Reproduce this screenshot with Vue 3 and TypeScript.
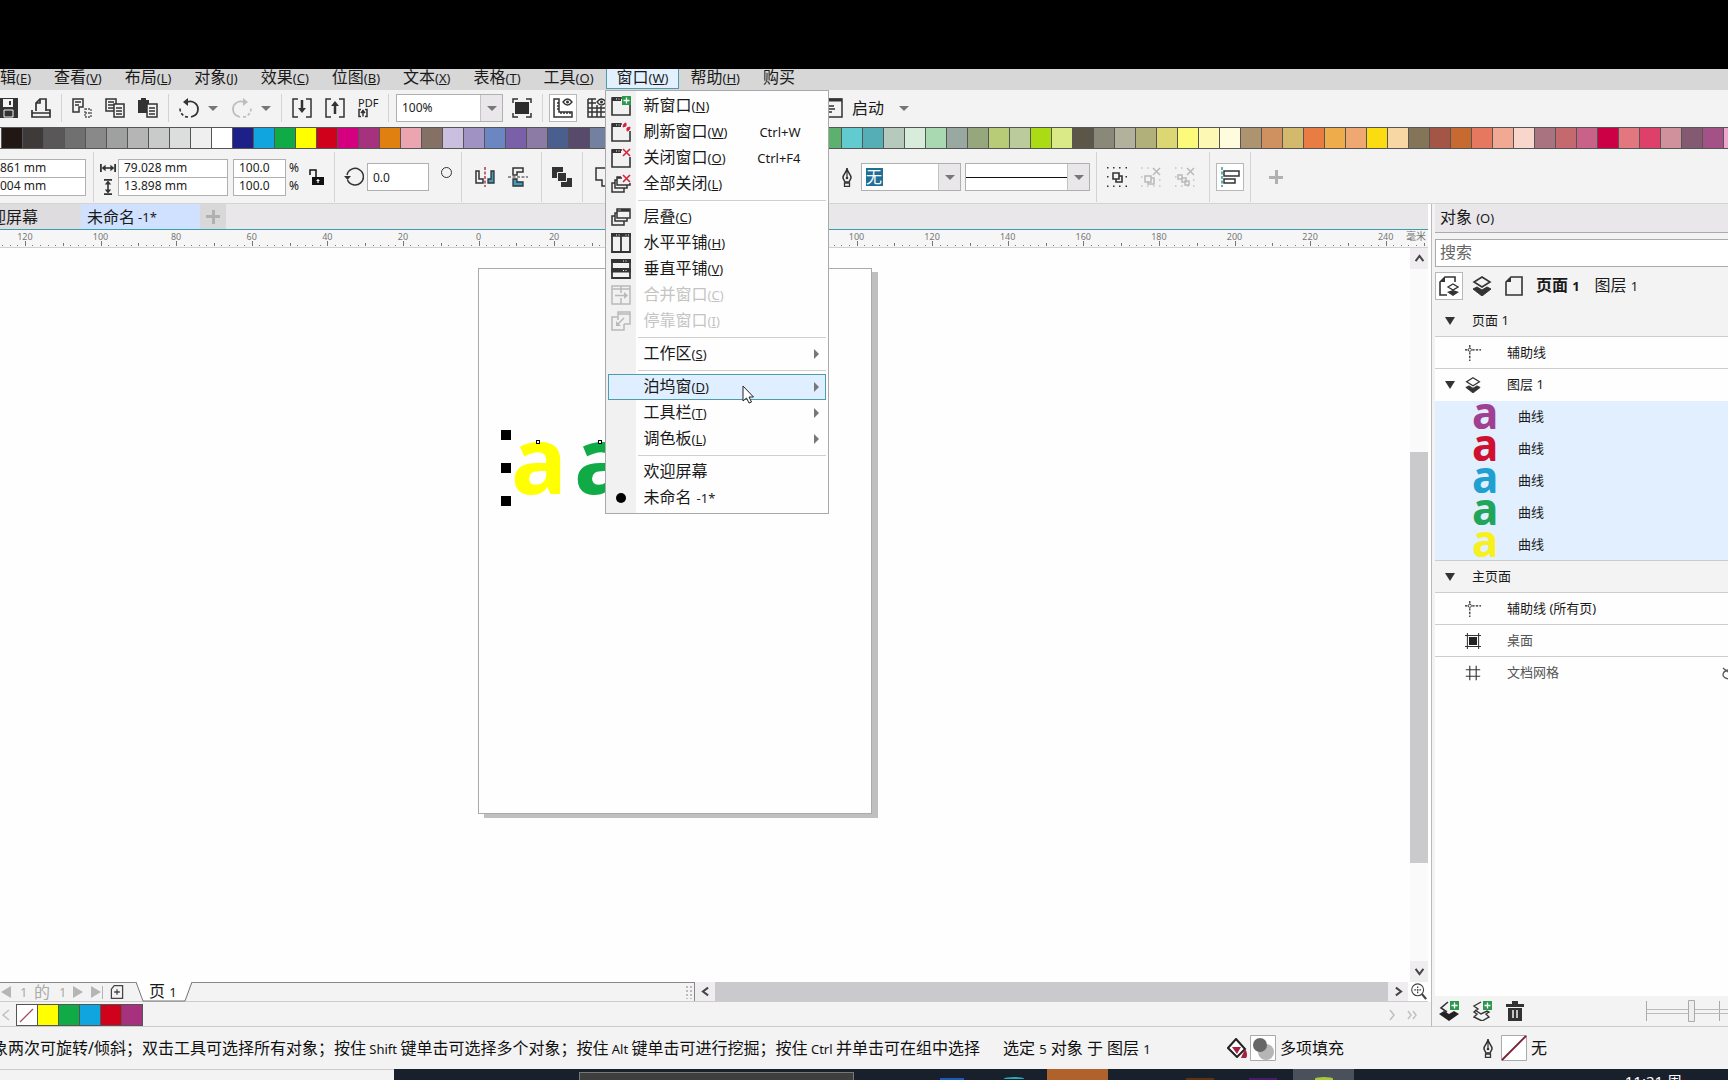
<script setup lang="ts">
import { ref } from 'vue'

interface MenuLabel { text: string; key?: string }
interface MenuRow {
  text?: string
  key?: string
  suffix?: string
  icon?: string
  shortcut?: string
  sub?: boolean
  disabled?: boolean
  active?: boolean
  sep?: boolean
}

const thin = 'fill="none" stroke="#333" stroke-width="1.5"'
const grey = 'fill="none" stroke="#b9b9b9" stroke-width="1.5"'
const win = (c: string) =>
  `<path d="M11 2H1v17h18V9" fill="none" stroke="${c}" stroke-width="1.6"/><path d="M1 1h9v4H1z" fill="${c}"/><path d="M5 3h1M7.500 3h1" stroke="#fff"/>`
const cascade =
  `<path d="M6 2h13v9H6zM6 4h13" ${thin}/><path d="M10 3h8" stroke="#333" stroke-width="2"/><path d="M6 6H4v8h12v-3M4 9H1v9h12v-4" ${thin}/>`
const cross = '<path d="M12 1l7 7M19 1l-7 7" stroke="#d2233c" stroke-width="1.6"/>'
const plusBadge = '<path d="M11 0h9v9h-9z" fill="#2a9a4a"/><path d="M15.500 1.500v6M12.500 4.500h6" stroke="#fff" stroke-width="1.300"/>'
const pen =
  '<path d="M10 1c0 5 4.500 6 4 10l-2 4H8l-2-4C5.500 7 10 6 10 1z" fill="none" stroke="#333" stroke-width="1.500"/><path d="M10 2v8" stroke="#333" stroke-width="1.200"/><circle cx="10" cy="11" r="1.300" fill="#333"/><path d="M7.500 16h5v3.300h-5z" fill="none" stroke="#333" stroke-width="1.300"/>'
const dots = (c: string) =>
  `<g fill="${c}"><path d="M0 0h1.500v1.500H0zM6 0h1.500v1.500H6zM12 0h1.500v1.500H12zM18.500 0H20v1.500h-1.500zM0 9h1.500v1.500H0zM18.500 9H20v1.500h-1.500zM0 18.500h1.500V20H0zM6 18.500h1.500V20H6zM12 18.500h1.500V20H12zM18.500 18.500H20V20h-1.500z"/></g>`
const greyCross = '<path d="M12 1l7 7M19 1l-7 7" stroke="#b9b9b9" stroke-width="1.500"/>'
const greyDots = '<path d="M0 1h1.500M6 1h1.500M0 10h1.500M0 19h1.500M6 19h1.500M12 19h1.500M18 19h1.500M18 13h1.500" stroke="#c4c4c4" stroke-width="1.500"/>'

const icons: Record<string, string> = {
  save: '<path d="M0 0h20v20H0z" fill="#333"/><path d="M5 1h10v8H5z" fill="#f3f3f3"/><path d="M11 3h2v4h-2z" fill="#333"/><path d="M6 12h9v7H6z" fill="#333" stroke="#f3f3f3"/><path d="M3 10h14" stroke="#333" stroke-width="2"/>',
  print: `<path d="M5 13V5l4-4h6v12M9 1v4H5M1 12v7h18v-7h-4M1 15h18" fill="none" stroke="#333" stroke-width="1.700"/>`,
  cut: `<path d="M7 14H1V1h10v8H7zM3 4h6M3 7h4" ${thin}/><path d="M13 11h6v8h-6zM13 15h6" fill="none" stroke="#555" stroke-width="1.300" stroke-dasharray="2 1"/>`,
  copy: `<path d="M1 1h10v12H1zM3 4h6M3 7h6M3 10h6" ${thin}/><path d="M9 6h10v13H9z" fill="#f3f3f3" stroke="#333" stroke-width="1.500"/><path d="M11 10h6M11 13h6M11 16h6" ${thin}/>`,
  paste: `<path d="M0 2h3V0h5v2h3v13H0z" fill="#333"/><path d="M9 6h10v13H9z" fill="#f3f3f3" stroke="#333" stroke-width="1.500"/><path d="M11 10h6M11 13h6M11 16h6" ${thin}/>`,
  undo: '<path d="M8 4c6-2 11 2 11 7 0 4-3 7-7 8" fill="none" stroke="#333" stroke-width="1.800"/><path d="M9 19c-5 0-8-4-8-9" fill="none" stroke="#333" stroke-width="1.600" stroke-dasharray="3 2"/><path d="M9 0v8L4 4z" fill="#333"/>',
  redo: '<path d="M12 4C6 2 1 6 1 11c0 4 3 7 7 8" fill="none" stroke="#bdbdbd" stroke-width="1.800"/><path d="M11 19c5 0 8-4 8-9" fill="none" stroke="#bdbdbd" stroke-width="1.600" stroke-dasharray="3 2"/><path d="M11 0v8l5-4z" fill="#bdbdbd"/>',
  import: `<path d="M6 1H1v18h5M14 1h5v18h-5" ${thin}/><path d="M10 2v9" stroke="#333" stroke-width="2.500"/><path d="M6 10h8l-4 5z" fill="#333"/>`,
  export: `<path d="M6 1H1v18h5M14 1h5v18h-5" ${thin}/><path d="M10 8v8" stroke="#333" stroke-width="2.500"/><path d="M6 8h8l-4-5z" fill="#333"/>`,
  full: '<path d="M3 4h14v12H3z" fill="#2d2d2d"/><path d="M1 5V1h5M14 1h5v4M1 15v4h5M14 19h5v-4" fill="none" stroke="#333" stroke-width="1.500"/>',
  rulers: `<path d="M1 1h5v13h13v5H1zM4 5h2M4 8h2M4 11h2M8 16v-2M11 16v-2M14 16v-2M17 16v-2" ${thin}/><path d="M10 4c3-4 6-4 9 0-3 4-6 4-9 0z" fill="none" stroke="#333" stroke-width="1.300"/><circle cx="14.500" cy="4" r="1.500" fill="#333"/>`,
  grid: `<path d="M1 1v18h18V8M1 5h8M1 10h18M1 14h18M5 1v18M10 7v12M14 8v11M1 1h8" ${thin}/><path d="M10 4c3-4 6-4 9 0-3 4-6 4-9 0z" fill="none" stroke="#333" stroke-width="1.300"/><circle cx="14.500" cy="4" r="1.500" fill="#333"/>`,
  launch: `<path d="M1 1h18v18H1z" ${thin}/><path d="M1 2h18" stroke="#333" stroke-width="3"/><path d="M4 8h7M5 11h7M4 14h5" ${thin}/>`,
  width: '<path d="M1 5v10M19 5v10" stroke="#333" stroke-width="2.500"/><path d="M4 10h12" stroke="#333" stroke-width="2"/><path d="M2 10l5-4v8zM18 10l-5-4v8z" fill="#333"/>',
  height: '<path d="M5 1h10M5 19h10" stroke="#333" stroke-width="2.500"/><path d="M10 4v12" stroke="#333" stroke-width="2"/><path d="M10 2L6 7h8zM10 18l-4-5h8z" fill="#333"/>',
  lock: '<path d="M8 11V3H2v5" fill="none" stroke="#111" stroke-width="1.500"/><path d="M4 10h12v8H4z" fill="#111"/><path d="M10 12v4M8.500 13.500h3" stroke="#fff" stroke-width="1.200"/>',
  rotate: '<path d="M3.500 13A8.300 8.300 0 1 0 3 8" fill="none" stroke="#333" stroke-width="1.500"/><path d="M0 9h7l-3.500 4z" fill="#333"/>',
  mirrorH: '<path d="M1 4h3v8h4v4H1z" fill="none" stroke="#333" stroke-width="1.500"/><path d="M19 4h-3v8h-3v4h6z" fill="#3d9dbd" stroke="#333" stroke-width="1.300"/><path d="M10 0v20" stroke="#a02040" stroke-width="1.300" stroke-dasharray="3 1.500"/>',
  mirrorV: '<path d="M5 8V1h10v4H9v3z" fill="none" stroke="#333" stroke-width="1.500"/><path d="M5 12v7h10v-4H9v-3z" fill="#3d9dbd" stroke="#333" stroke-width="1.300"/><path d="M0 10h20" stroke="#333" stroke-width="1.200" stroke-dasharray="3 1.500"/>',
  combine: '<path d="M0 0h11v11H0zM11 11h9v9H9v-7z" fill="#333"/><path d="M5.500 5.500h9v9h-9z" fill="#333" stroke="#f3f3f3"/>',
  trim: `<path d="M1 1h12v6h6v12H7v-6H1z" ${thin}/>`,
  pen,
  group: dots('#333') + '<path d="M6 6h6v6H6z" fill="none" stroke="#333" stroke-width="1.600"/><path d="M12 9h3v6H9v-3" fill="none" stroke="#333" stroke-width="1.600"/>',
  ungroup: greyDots + greyCross + `<path d="M4 9h6v6H4zM10 11h3v6H7v-2" ${grey}/>`,
  ungroupAll: greyDots + greyCross + `<path d="M3 8h4v4H3zM7 11h4v4H7zM10 14h4v4h-4z" ${grey}/>`,
  align: '<path d="M2 0v20" stroke="#2a9a9a" stroke-width="1.500" stroke-dasharray="3 1.500"/><path d="M4 4h15v5H4zM4 12h11v4H4z" fill="none" stroke="#333" stroke-width="1.500"/>',
  newWin: win('#333') + plusBadge,
  refresh: win('#333') + '<path d="M12 5c0-3 2-4 3-4v3zM19 5c0 3-2 4-3 4V6z" fill="#d2233c" stroke="#d2233c"/>',
  closeWin: win('#333') + cross,
  closeAll: `<path d="M10 3H6v8h13V9M6 6H4v8h12v-3M4 9H1v9h12v-4M6 4h5" ${thin}/>` + cross,
  cascade,
  tileH: '<path d="M1 1h18v18H1zM10 1v18" fill="none" stroke="#333" stroke-width="1.800"/><path d="M0 2h20" stroke="#333" stroke-width="3.500"/><path d="M5 2h1M7.500 2h1M14.500 2h1M17 2h1" stroke="#fff"/>',
  tileV: '<path d="M1 1h18v18H1zM1 10h18" fill="none" stroke="#333" stroke-width="1.800"/><path d="M0 2h20M0 11.500h20" stroke="#333" stroke-width="4"/><path d="M12 2h1M14.500 2h1M12 11.500h1M14.500 11.500h1" stroke="#fff"/>',
  merge: `<path d="M1 1h18v18H1zM1 4h18M10 1v7M10 13v6M4 10.500h12" ${grey}/><path d="M13 7l4 3.500-4 3.500z" fill="#b9b9b9"/>`,
  dock: `<path d="M7 9V1h12v12h-6M7 3h12M7 6H1v13h12v-6M7 13l6-6" ${grey}/><path d="M5 10v5h5z" fill="#b9b9b9"/>`,
  bullet: '<circle cx="10" cy="10" r="5" fill="#000"/>',
  pageLayers: '<path d="M16 6V1H6L1 6v13h7" fill="none" stroke="#333" stroke-width="1.600"/><path d="M1 6h5V1z" fill="#333"/><path d="M14 8l5 3-5 3-5-3z" fill="#fff" stroke="#333" stroke-width="1.300"/><path d="M8 16l6-2 6 2-6 4z" fill="#333"/>',
  layers: '<path d="M10 1l8 5-8 5-8-5z" fill="none" stroke="#333" stroke-width="1.600"/><path d="M1 13l4-2 5 3 5-3 4 2-9 7z" fill="#333" stroke="#333"/>',
  page: '<path d="M2 6l5-5h11v18H2z" fill="none" stroke="#333" stroke-width="1.600"/><path d="M2 6h5V1z" fill="#333"/>',
  guides: '<path d="M6 0v20M0 6h20" fill="none" stroke="#222" stroke-width="1.500" stroke-dasharray="3 1.500"/><circle cx="6" cy="6" r="2" fill="#fff" stroke="#222"/>',
  desktop: '<path d="M5 5h10v10H5z" fill="#222"/><path d="M3 0v20M17 0v20M0 3h20M0 17h20" stroke="#333" stroke-width="1.300"/>',
  gridDoc: '<path d="M6 1v18M14 1v18M1 6h18M1 14h18" stroke="#333" stroke-width="1.400"/>',
  newLayer: '<path d="M9 1L2 7l6 4" fill="none" stroke="#333" stroke-width="1.600"/><path d="M0 13l5-3 5 3 5-3 5 3-10 7z" fill="#222"/>' + plusBadge,
  newMaster: '<path d="M9 1L2 5l4 3-4 3 3 2-3 3 8 4 7-4-3-3 3-2-2-1-6 3-6-4" fill="none" stroke="#333" stroke-width="1.400"/>' + plusBadge,
  trash: '<path d="M1 3h18v3H1zM7 0h6v3H7z" fill="#333"/><path d="M3 7h14v13H3z" fill="#333"/><path d="M8 9v8M12 9v8" stroke="#f3f3f3" stroke-width="1.500"/>',
  zoom: '<circle cx="9" cy="8" r="7" fill="none" stroke="#444" stroke-width="1.300"/><path d="M14 13l5 6" stroke="#444" stroke-width="2.500"/><path d="M9 4v8M5 8h8" stroke="#444" stroke-width="1.500" stroke-dasharray="2 1"/>',
  addPage: '<path d="M2 6l4-5h12v18H2zM10 6v8M6 10h8" fill="none" stroke="#444" stroke-width="1.800"/>',
  bucket: '<path d="M9 1l9 10-8 8-9-9z" fill="#fff" stroke="#222" stroke-width="2"/><path d="M5 9h9l-4 7z" fill="#a82040"/><path d="M18 11c3 4 2 8 1 9h-5z" fill="#a82040"/>',
}

const menus: MenuLabel[] = [
  { text: '编辑', key: 'E' }, { text: '查看', key: 'V' }, { text: '布局', key: 'L' },
  { text: '对象', key: 'J' }, { text: '效果', key: 'C' }, { text: '位图', key: 'B' },
  { text: '文本', key: 'X' }, { text: '表格', key: 'T' }, { text: '工具', key: 'O' },
]
const menusAfter: MenuLabel[] = [{ text: '帮助', key: 'H' }, { text: '购买' }]

const rows: MenuRow[] = [
  { text: '新窗口', key: 'N', icon: 'newWin' },
  { text: '刷新窗口', key: 'W', icon: 'refresh', shortcut: 'Ctrl+W' },
  { text: '关闭窗口', key: 'O', icon: 'closeWin', shortcut: 'Ctrl+F4' },
  { text: '全部关闭', key: 'L', icon: 'closeAll' },
  { sep: true },
  { text: '层叠', key: 'C', icon: 'cascade' },
  { text: '水平平铺', key: 'H', icon: 'tileH' },
  { text: '垂直平铺', key: 'V', icon: 'tileV' },
  { text: '合并窗口', key: 'C', icon: 'merge', disabled: true },
  { text: '停靠窗口', key: 'I', icon: 'dock', disabled: true },
  { sep: true },
  { text: '工作区', key: 'S', sub: true },
  { sep: true },
  { text: '泊坞窗', key: 'D', sub: true, active: true },
  { text: '工具栏', key: 'T', sub: true },
  { text: '调色板', key: 'L', sub: true },
  { sep: true },
  { text: '欢迎屏幕' },
  { text: '未命名', suffix: '-1*', icon: 'bullet' },
]

const palette: string[] = [
  '#211815', '#3e3a39', '#595757', '#717071', '#898989', '#9fa0a0', '#b5b5b6', '#c9caca', '#dcdddd', '#efefef',
  '#ffffff', '#1d2088', '#10a5de', '#10ab46', '#ffff00', '#d0021b', '#d4007f', '#a5317f', '#e08010', '#eba5b0',
  '#857066', '#cbbfe0', '#a192c4', '#6b86c1', '#7a60a8', '#8c7ba5', '#4b5f8e', '#584a6a', '#73809f', '#6b7f94',
  '#8fa3b0', '#a8c0cc', '#7fb6c8', '#4aa0b8', '#3f8c96', '#5a9a90', '#7cb3a2', '#4f9c7e', '#3fa56c', '#5cb070',
  '#62cbd0', '#55adb5', '#b5cabd', '#d8ecdc', '#a9d9b0', '#99a8a0', '#96a67d', '#b8cc77', '#bbcb9b', '#aadb14',
  '#d9ea86', '#5b5647', '#8a8878', '#b1b19c', '#b1b07a', '#dcd673', '#fcfa7a', '#fdf9b4', '#fffbdf', '#ae9370',
  '#cf9160', '#d2b96c', '#e87c42', '#eeac4b', '#f0a873', '#fbdc10', '#f7d7a4', '#857558', '#a35546', '#c76a30',
  '#e6785f', '#f1a993', '#f8d6cb', '#a9747f', '#c46a6e', '#c96289', '#cc0044', '#e37780', '#df4069', '#d0919c',
  '#845a73', '#a45188', '#f0a5cd',
]
const docPalette: string[] = ['#ffff00', '#10ab46', '#10a5de', '#d0021b', '#a5317f']

// Ruler: 20 mm take 75.6 px on screen, origin at the left edge of the page.
const origin = 478.5
const step = 75.6
const labels = Array.from({ length: 19 }, (_, i) => i - 6).map(n => ({
  x: origin + n * step, text: String(Math.abs(n * 20)),
})).filter(l => l.x < 1400)
const ticks = Array.from({ length: 189 }, (_, i) => i - 63).map(n => ({
  x: Math.round(origin + (n * step) / 10),
  h: n % 10 === 0 ? 5 : n % 5 === 0 ? 3 : 1,
}))

const curves: string[] = ['#a04090', '#d0102f', '#20a0d0', '#20a55a', '#f7f01c']
const x = ref('861 mm')
const y = ref('004 mm')
const w = ref('79.028 mm')
const h = ref('13.898 mm')
const sx = ref('100.0')
const sy = ref('100.0')
const angle = ref('0.0')
const query = ref('')
</script>

<template>
  <div class="app">
    <div class="blank"></div>

    <nav class="menubar">
      <button v-for="m in menus" :key="m.text" class="menu-btn">{{ m.text }}<small>(<u>{{ m.key }}</u>)</small></button>
      <div class="menu-open">
        <button class="menu-btn open">窗口<small>(<u>W</u>)</small></button>
        <div class="dropdown" role="menu">
          <template v-for="(r, i) in rows" :key="i">
            <div v-if="r.sep" class="sep" role="separator"></div>
            <button v-else class="row" :class="{ active: r.active }" :disabled="r.disabled" role="menuitem">
              <span class="gutter"><svg v-if="r.icon" class="ic" viewBox="0 0 20 20" v-html="icons[r.icon]"></svg></span>
              <span class="row-text">{{ r.text }}<small v-if="r.key">(<u>{{ r.key }}</u>)</small><small v-if="r.suffix" class="suffix">{{ r.suffix }}</small></span>
              <span v-if="r.shortcut" class="shortcut">{{ r.shortcut }}</span>
              <i v-if="r.sub" class="sub"></i>
            </button>
          </template>
          <svg class="cursor" viewBox="0 0 12 19"><path d="M1 1v15l3.500-3 2.500 5 2.500-1-2.500-5h4.500z" fill="#fff" stroke="#222" /></svg>
        </div>
      </div>
      <button v-for="m in menusAfter" :key="m.text" class="menu-btn">{{ m.text }}<small v-if="m.key">(<u>{{ m.key }}</u>)</small></button>
    </nav>

    <div class="toolbar">
      <div class="group first">
        <button v-for="n in ['save', 'print']" :key="n" class="tool" :aria-label="n"><svg class="ic" viewBox="0 0 20 20" v-html="icons[n]"></svg></button>
      </div>
      <div class="group">
        <button v-for="n in ['cut', 'copy', 'paste']" :key="n" class="tool" :aria-label="n"><svg class="ic" viewBox="0 0 20 20" v-html="icons[n]"></svg></button>
      </div>
      <div class="group history">
        <button v-for="n in ['undo', 'redo']" :key="n" class="tool split" :aria-label="n"><svg class="ic" viewBox="0 0 20 20" v-html="icons[n]"></svg><i class="caret"></i></button>
      </div>
      <div class="group">
        <button v-for="n in ['import', 'export']" :key="n" class="tool" :aria-label="n"><svg class="ic" viewBox="0 0 20 20" v-html="icons[n]"></svg></button>
        <button class="tool pdf" aria-label="pdf">
          <span>PDF</span>
          <svg viewBox="0 0 10 9"><path d="M3 1H1v7h2M7 1h2v7H7M5 8V3M3 4.500L5 2l2 2.500" fill="none" stroke="#333" stroke-width="1.500" /></svg>
        </button>
      </div>
      <div class="group view">
        <label class="combo zoom-combo"><select aria-label="缩放级别"><option>100%</option></select><span class="drop"><i class="caret"></i></span></label>
        <button class="tool" aria-label="full"><svg class="ic" viewBox="0 0 20 20" v-html="icons.full"></svg></button>
      </div>
      <div class="group show">
        <button class="boxed" aria-label="rulers"><svg class="ic" viewBox="0 0 20 20" v-html="icons.rulers"></svg></button>
        <button class="tool" aria-label="grid"><svg class="ic" viewBox="0 0 20 20" v-html="icons.grid"></svg></button>
      </div>
      <button class="launch"><svg class="ic" viewBox="0 0 20 20" v-html="icons.launch"></svg>启动<i class="caret"></i></button>
    </div>

    <div class="palette">
      <button v-for="(c, i) in palette" :key="i" class="swatch" :aria-label="c" :style="{ background: c }"></button>
    </div>

    <div class="props">
      <div class="pgroup pos">
        <div class="pair cut-pair"><input v-model="x" aria-label="X"><input v-model="y" aria-label="Y"></div>
      </div>
      <div class="pgroup size">
        <div class="mini"><svg viewBox="0 0 20 20" v-html="icons.width"></svg><svg viewBox="0 0 20 20" v-html="icons.height"></svg></div>
        <div class="pair wide"><input v-model="w" aria-label="宽度"><input v-model="h" aria-label="高度"></div>
        <div class="pair narrow"><input v-model="sx" aria-label="水平比例"><input v-model="sy" aria-label="垂直比例"></div>
        <div class="pct"><span>%</span><span>%</span></div>
        <button class="tool" aria-label="lock"><svg class="ic" viewBox="0 0 20 20" v-html="icons.lock"></svg></button>
      </div>
      <div class="pgroup angle">
        <svg class="ic" viewBox="0 0 20 20" v-html="icons.rotate"></svg>
        <input v-model="angle" aria-label="旋转角度">
        <i class="degree"></i>
      </div>
      <div class="pgroup mirror">
        <button v-for="n in ['mirrorH', 'mirrorV']" :key="n" class="tool" :aria-label="n"><svg class="ic" viewBox="0 0 20 20" v-html="icons[n]"></svg></button>
      </div>
      <div class="pgroup single">
        <button class="tool" aria-label="combine"><svg class="ic" viewBox="0 0 20 20" v-html="icons.combine"></svg></button>
      </div>
      <div class="pgroup shaping">
        <button class="tool" aria-label="trim"><svg class="ic" viewBox="0 0 20 20" v-html="icons.trim"></svg></button>
      </div>
      <div class="pgroup outline">
        <svg class="ic" viewBox="0 0 20 20" v-html="icons.pen"></svg>
        <label class="combo outline-combo"><select aria-label="轮廓宽度"><option>无</option></select><span class="drop"><i class="caret"></i></span></label>
        <label class="combo line-combo"><select aria-label="线条样式"><option></option></select><span class="drop"><i class="caret"></i></span></label>
      </div>
      <div class="pgroup grouping">
        <button v-for="n in ['group', 'ungroup', 'ungroupAll']" :key="n" class="tool" :aria-label="n"><svg class="ic" viewBox="0 0 20 20" v-html="icons[n]"></svg></button>
      </div>
      <div class="pgroup aligning">
        <button class="boxed" aria-label="align"><svg class="ic" viewBox="0 0 20 20" v-html="icons.align"></svg></button>
      </div>
      <button class="plus" aria-label="add"></button>
    </div>

    <main class="main">
      <section class="doc">
        <div class="tabs">
          <button class="tab">迎屏幕</button>
          <button class="tab current">未命名 <small>-1*</small></button>
          <button class="tab-add" aria-label="new tab"><span class="plus"></span></button>
        </div>
        <div class="ruler">
          <svg class="scale" height="17">
            <text v-for="l in labels" :key="l.x" :x="l.x" y="10" text-anchor="middle">{{ l.text }}</text>
            <rect v-for="t in ticks" :key="t.x" :x="t.x" :y="16 - t.h" width="1" :height="t.h" fill="#777" />
          </svg>
          <span class="unit">毫米</span>
        </div>
        <div class="work">
          <div class="canvas">
            <div class="sheet"></div>
            <span class="glyph yellow">a</span>
            <span class="glyph green">a</span>
            <i class="node n1"></i><i class="node n2"></i>
            <i class="handle h1"></i><i class="handle h2"></i><i class="handle h3"></i>
          </div>
          <div class="vscroll">
            <button aria-label="up"><svg viewBox="0 0 10 10"><path d="M2 7l3-4 3 4" /></svg></button>
            <div class="vtrack"><div class="vthumb"></div></div>
            <button aria-label="down"><svg viewBox="0 0 10 10"><path d="M2 3l3 4 3-4" /></svg></button>
          </div>
        </div>
        <div class="pagenav">
          <div class="pager">
            <i class="arrow left"></i><small>1</small><span>的</span><small>1</small><i class="arrow"></i><i class="arrow last"></i><i class="bar"></i>
            <svg class="add-page" viewBox="0 0 20 20" v-html="icons.addPage"></svg>
          </div>
          <button class="page-tab">
            <svg viewBox="0 0 56 20"><path d="M0 0l7 19h41l7-19z" fill="#fff" /><path d="M0 0l7 19h42l7-19" fill="none" stroke="#777" /></svg>
            <span>页 <small>1</small></span>
          </button>
          <div class="nav-rest"><i class="grip"></i></div>
          <button class="harrow" aria-label="left"><svg viewBox="0 0 10 10"><path d="M7 2L3 5l4 3" /></svg></button>
          <div class="hthumb"></div>
          <button class="harrow" aria-label="right"><svg viewBox="0 0 10 10"><path d="M3 2l4 3-4 3" /></svg></button>
          <button class="zoom-btn" aria-label="zoom"><svg viewBox="0 0 20 20" v-html="icons.zoom"></svg></button>
        </div>
        <div class="doc-palette">
          <svg class="chev" viewBox="0 0 10 12"><path d="M8 1L2 6l6 5" /></svg>
          <div class="doc-swatches">
            <button class="swatch none" aria-label="none"><svg viewBox="0 0 20 20"><path d="M3 17L16 4" stroke="#a05060" stroke-width="1.300" /></svg></button>
            <button v-for="c in docPalette" :key="c" class="swatch" :aria-label="c" :style="{ background: c }"></button>
          </div>
          <svg class="chev push" viewBox="0 0 10 12"><path d="M3 1l4 5-4 5" /></svg>
          <svg class="chev" viewBox="0 0 10 12"><path d="M1 2l3 4-3 4M6 2l3 4-3 4" /></svg>
        </div>
      </section>

      <aside class="panel">
        <h2>对象 <small>(O)</small></h2>
        <input v-model="query" class="search" placeholder="搜索" aria-label="搜索">
        <div class="panel-tools">
          <button class="boxed" aria-label="pages and layers"><svg class="ic" viewBox="0 0 20 20" v-html="icons.pageLayers"></svg></button>
          <button class="tool" aria-label="layers"><svg class="ic" viewBox="0 0 20 20" v-html="icons.layers"></svg></button>
          <button class="tool" aria-label="page"><svg class="ic" viewBox="0 0 20 20" v-html="icons.page"></svg></button>
          <span class="crumbs"><b>页面 <small>1</small></b><span>图层 <small>1</small></span></span>
        </div>
        <ul class="tree">
          <li class="head"><i class="tri"></i><span class="name l1">页面 1</span></li>
          <li><i class="tri none"></i><svg class="ti" viewBox="0 0 20 20" v-html="icons.guides"></svg><span class="name">辅助线</span></li>
          <li class="layer"><i class="tri"></i><svg class="ti" viewBox="0 0 20 20" v-html="icons.layers"></svg><span class="name">图层 1</span></li>
          <li v-for="(c, i) in curves" :key="c" class="curve" :class="{ end: i === curves.length - 1 }"><span class="thumb" :style="{ color: c }">a</span><span class="name">曲线</span></li>
          <li class="head"><i class="tri"></i><span class="name l1">主页面</span></li>
          <li><i class="tri none"></i><svg class="ti" viewBox="0 0 20 20" v-html="icons.guides"></svg><span class="name">辅助线 (所有页)</span></li>
          <li><i class="tri none"></i><svg class="ti" viewBox="0 0 20 20" v-html="icons.desktop"></svg><span class="name dim">桌面</span></li>
          <li class="layer"><i class="tri none"></i><svg class="ti" viewBox="0 0 20 20" v-html="icons.gridDoc"></svg><span class="name dim">文档网格</span><svg class="eye" viewBox="0 0 6 14"><path d="M1 2l5 4M6 4C2 5 1 7 1 9s2 3 5 4" fill="none" stroke="#555" stroke-width="1.300" /></svg></li>
        </ul>
        <div class="panel-foot">
          <button v-for="n in ['newLayer', 'newMaster', 'trash']" :key="n" class="tool" :aria-label="n"><svg class="ic" viewBox="0 0 20 20" v-html="icons[n]"></svg></button>
          <svg class="slider" viewBox="0 0 82 22"><path d="M0.500 1v20M73.500 1v20" stroke="#aaa" /><path d="M1 9.500h81M1 13.500h81" stroke="#bbb" /><path d="M42.500 .5h6v21h-6z" fill="#eee" stroke="#aaa" /></svg>
        </div>
      </aside>
    </main>

    <footer class="status">
      <span class="hint">象两次可旋转/倾斜；双击工具可选择所有对象；按住<small> Shift </small>键单击可选择多个对象；按住<small> Alt </small>键单击可进行挖掘；按住<small> Ctrl </small>并单击可在组中选择</span>
      <span class="selection">选定 <small>5</small> 对象 于 图层 <small>1</small></span>
      <span class="fill">
        <svg class="ic" viewBox="0 0 20 20" v-html="icons.bucket"></svg>
        <svg class="chip" viewBox="0 0 26 26"><path d="M.5 .5h25v25H.5z" fill="#fff" stroke="#aaa" /><circle cx="16" cy="17" r="8" fill="#b5b5b5" /><circle cx="10" cy="10" r="7" fill="#666" /></svg>
        多项填充
      </span>
      <span class="stroke">
        <svg class="ic" viewBox="0 0 20 20" v-html="icons.pen"></svg>
        <svg class="chip" viewBox="0 0 26 26"><path d="M.5 .5h25v25H.5z" fill="#fff" stroke="#aaa" /><path d="M1 25L25 1" stroke="#7a2035" stroke-width="1.800" /></svg>
        无
      </span>
    </footer>

    <div class="taskbar">
      <div class="task-light"></div>
      <div class="task-search"></div>
      <div class="task-apps">
        <i class="app-blue"></i><i class="app-ring"></i><i class="app-orange"></i><i class="app-brown"></i><i class="app-purple"></i><i class="app-grey"><i></i></i>
      </div>
      <span class="clock">11:21 周</span>
    </div>
  </div>
</template>

<style>
html, body { margin: 0; background: #000; }
</style>

<style scoped>
* { box-sizing: border-box; }
.app {
  display: flex; flex-direction: column; height: 100vh; overflow: hidden;
  background: #f3f3f3; color: #1a1a1a;
  font: 16px/20px "Noto Sans", "Noto Sans CJK SC", sans-serif;
}
small { font-size: 13px; }
button { display: flex; align-items: center; padding: 0; border: 0; background: none; color: inherit; font: inherit; white-space: nowrap; }
input, select { min-width: 0; margin: 0; border: 0; border-radius: 0; outline: 0; background: #fff; color: #222; font: 12px/16px "Noto Sans", "Noto Sans CJK SC", sans-serif; }
.ic { display: block; flex: none; width: 20px; height: 20px; }
.blank { flex: none; height: 69px; background: #000; }

.menubar { display: flex; flex: none; height: 21px; margin-left: -27px; background: #d7d7d7; }
.menu-btn { display: block; height: 21px; padding: 0 12px 4px 11px; line-height: 17px; }
.menu-open { position: relative; }
.menu-btn.open { height: 20px; padding: 0 10px 3px; border: 1px solid #4a9cae; border-top: 0; background: #e3f1fe; }
.dropdown { position: absolute; z-index: 5; top: 21px; left: -1px; width: 224px; padding: 2px 0; border: 1px solid #a9a9a9; background: linear-gradient(to right, #f1f1f1 30px, #fefefe 30px); }
.row { position: relative; width: 218px; height: 26px; margin-left: 2px; border: 1px solid transparent; text-align: left; }
.row.active { border-color: #4a9cae; background: #e0efff; }
.row:disabled { color: #c4c4c4; }
.gutter { flex: none; width: 35px; padding-left: 2px; }
.row-text { flex: 1; padding-bottom: 2px; }
.suffix { margin-left: 5px; }
.shortcut { width: 65px; padding-right: 24px; display: flex; justify-content: flex-end; font-size: 13px; }
.sub { width: 0; margin-right: 6px; border: 5px solid transparent; border-right: 0; border-left-color: #777; }
.sep { height: 1px; margin: 3px 2px 3px 32px; background: #cfcfcf; }
.cursor { position: absolute; top: 294px; left: 136px; width: 12px; height: 19px; }

.toolbar { display: flex; align-items: center; flex: none; height: 36px; }
.group { display: flex; align-items: center; gap: 13px; flex: none; height: 28px; padding: 0 10px; border-right: 1px solid #d3d3d3; }
.group.first { padding-left: 0; margin-left: -2px; }
.group.history { gap: 14px; }
.split { gap: 9px; }
.caret { flex: none; width: 10px; border: 5px solid transparent; border-bottom: 0; border-top-color: #777; }
.pdf { flex-direction: column; align-items: flex-start; width: 20px; font-size: 11px; line-height: 10px; }
.pdf svg { width: 10px; height: 10px; }
.group.view { gap: 9px; padding-left: 7px; }
.group.show { border: 0; padding: 0 0 0 6px; gap: 10px; }
.boxed { justify-content: center; flex: none; width: 28px; height: 28px; border: 1px solid #b8b8b8; background: #fff; }
.launch { gap: 9px; margin-left: 216px; }
.launch .caret { margin-left: 6px; }
.combo { position: relative; display: block; height: 28px; }
.combo select { display: block; width: 100%; height: 28px; padding: 0 5px; border: 1px solid #b0b0b0; appearance: none; }
.drop { position: absolute; top: 1px; right: 1px; bottom: 1px; width: 22px; display: flex; align-items: center; justify-content: center; border-left: 1px solid #c4c4c4; background: #e9e7ea; pointer-events: none; }
.zoom-combo { width: 107px; }

.palette { display: flex; flex: none; height: 22px; margin-top: 1px; padding-left: 1px; border-top: 1px solid #555; border-bottom: 1px solid #555; overflow: hidden; }
.swatch { flex: none; width: 21px; height: 20px; border: 0 solid #555; border-left-width: 1px; }

.props { display: flex; align-items: center; flex: none; height: 55px; padding-top: 2px; border-bottom: 1px solid #d3d3d3; }
.pgroup { display: flex; align-items: center; flex: none; height: 50px; border-right: 1px solid #d3d3d3; }
.pos { width: 94px; }
.pair { display: flex; flex-direction: column; height: 37px; border: 1px solid #b0b0b0; }
.pair input { flex: 1; width: 100%; padding: 0 0 0 5px; }
.pair input:first-child { border-bottom: 1px solid #b0b0b0; }
.cut-pair { width: 86px; border-left: 0; }
.cut-pair input { padding: 0; }
.wide { width: 110px; }
.narrow { width: 53px; margin-left: 5px; }
.mini { display: flex; flex-direction: column; gap: 3px; width: 24px; padding-left: 6px; }
.mini svg { width: 16px; height: 16px; }
.pct { display: flex; flex-direction: column; width: 22px; padding-left: 3px; font-size: 12px; line-height: 18px; }
.size { width: 241px; }
.angle { width: 127px; padding-left: 9px; }
.angle input { width: 62px; height: 28px; margin-left: 3px; padding-left: 5px; border: 1px solid #b0b0b0; }
.degree { width: 11px; height: 11px; margin: 0 0 10px 12px; border: 1px solid #333; border-radius: 50%; }
.mirror { width: 80px; padding-left: 13px; gap: 13px; }
.single { width: 41px; padding-left: 10px; }
.shaping { padding-left: 12px; border: 0; width: 234px; }
.outline { padding: 0 6px 0 20px; gap: 4px; }
.outline-combo { width: 100px; }
.outline-combo select { color: #fff; font-size: 16px; padding-left: 4px; background: linear-gradient(#1f7098, #1f7098) 4px 4px / 17px 18px no-repeat #fff; }
.line-combo { width: 125px; }
.line-combo select { background: linear-gradient(#111, #111) 0 13px / 100% 1px no-repeat #fff; }
.grouping { width: 113px; padding-left: 10px; gap: 14px; }
.aligning { width: 41px; padding-left: 6px; }
.plus { flex: none; width: 14px; height: 14px; background: linear-gradient(#b0b0b0, #b0b0b0) center / 14px 3px no-repeat, linear-gradient(#b0b0b0, #b0b0b0) center / 3px 14px no-repeat; }
.props > .plus { margin-left: 18px; }

.main { display: flex; flex: 1; min-height: 0; }
.doc { display: flex; flex: 1; flex-direction: column; min-width: 0; padding-right: 3px; background: #fff; }
.tabs { display: flex; flex: none; height: 26px; border-bottom: 1px solid #3d9dae; background: #e9e7ea; }
.tab { width: 81px; background: #dedcde; margin-left: 0; }
.tab:first-child { text-indent: -10px; }
.tab.current { width: 119px; padding-left: 6px; gap: 3px; background: #cfe1fe; }
.tab-add { justify-content: center; width: 26px; background: #d9d8d9; }
.ruler { display: flex; flex: none; height: 18px; border-bottom: 1px solid #d0d0d0; background: #f6f6f6; position: relative; }
.scale { flex: 1; min-width: 0; }
.scale text { fill: #777; font-size: 9px; }
.unit { position: absolute; top: 0; right: 2px; color: #777; background: #f6f6f6; font-size: 10px; line-height: 13px; }
.work { display: flex; flex: 1; min-height: 0; background: #fefefe; }
.canvas { position: relative; flex: 1; overflow: hidden; }
.sheet { position: absolute; top: 20px; left: 478px; width: 394px; height: 546px; border: 1px solid #aaa; background: #fefefe; box-shadow: 6px 4px 0 #bfbfbf; }
.glyph { position: absolute; top: 145px; font: bold 93px/130px "Noto Sans", sans-serif; }
.yellow { left: 511px; color: #ffff00; }
.green { left: 574px; color: #10ab46; }
.node { position: absolute; top: 192px; width: 4px; height: 4px; border: 1px solid #000; background: #fff; }
.n1 { left: 536px; }
.n2 { left: 598px; }
.handle { position: absolute; left: 501px; width: 10px; height: 10px; background: #000; }
.h1 { top: 182px; }
.h2 { top: 215px; }
.h3 { top: 248px; }
.vscroll { display: flex; flex-direction: column; flex: none; width: 18px; background: #fafafa; }
.vscroll button, .harrow { justify-content: center; height: 21px; background: #efedef; }
.vscroll svg, .harrow svg { width: 13px; height: 13px; fill: none; stroke: #444; stroke-width: 1.5; }
.vtrack { display: flex; flex: 1; flex-direction: column; }
.vthumb { height: 411px; margin-top: 183px; background: #cac9cb; }

.pagenav { display: flex; flex: none; height: 20px; border-bottom: 1px solid #ccc; background: #f3f3f3; }
.pager { display: flex; align-items: center; width: 136px; padding-left: 1px; border-top: 1px solid #888; color: #aaa; }
.arrow { flex: none; width: 10px; border: 6px solid transparent; border-right: 0; border-left: 10px solid #b5b5b5; margin-right: 8px; }
.arrow.left { border-left: 0; border-right: 10px solid #b5b5b5; margin-right: 9px; }
.arrow.last { margin-right: 1px; }
.bar { flex: none; width: 1px; height: 13px; margin-right: 7px; background: #b5b5b5; }
.pager small { width: 14px; }
.pager span + small { margin-left: 9px; }
.add-page { flex: none; width: 14px; height: 14px; }
.page-tab { position: relative; width: 56px; }
.page-tab svg { position: absolute; inset: 0; width: 56px; height: 20px; }
.page-tab span { position: relative; padding-left: 13px; }
.nav-rest { display: flex; justify-content: flex-end; width: 503px; border-top: 1px solid #888; border-right: 1px solid #888; }
.grip { width: 8px; margin: 2px 1px; background: radial-gradient(#bbb 1px, transparent 1px) 0 0 / 4px 4px; }
.harrow { width: 20px; height: 19px; }
.hthumb { flex: 1; background: #cac9cb; }
.zoom-btn { justify-content: center; width: 20px; background: #fff; }
.zoom-btn svg { width: 17px; height: 17px; }
.doc-palette { display: flex; align-items: center; flex: none; height: 25px; padding: 1px 13px 0 0; border-bottom: 1px solid #ccc; background: #f3f3f3; gap: 4px; margin-right: -3px; }
.chev { width: 12px; height: 12px; fill: none; stroke: #c0c0c0; stroke-width: 1.5; }
.chev.push { margin-left: auto; margin-right: 4px; }
.doc-swatches { display: flex; border: 1px solid #555; border-left: 0; }
.none { background: #fff; }

.panel { display: flex; flex: none; flex-direction: column; width: 297px; padding-left: 3px; border-left: 1px solid #bbb; border-bottom: 1px solid #ccc; }
.panel h2 { flex: none; height: 29px; margin: 0; padding: 3px 0 0 5px; border-bottom: 1px solid #aaa; background: #e9e7ea; font-size: 16px; font-weight: 400; }
.search { flex: none; height: 28px; margin-top: 6px; padding: 0 4px 2px; border: 1px solid #aaa; border-right: 0; font-size: 16px; }
.search::placeholder { color: #666; opacity: 1; }
.panel-tools { display: flex; align-items: center; flex: none; height: 38px; gap: 12px; }
.panel-tools .boxed { margin-right: -3px; }
.crumbs { display: flex; gap: 15px; padding-bottom: 2px; }
.tree { flex: 1; min-height: 0; margin: 0; padding: 0; background: #fefefe; list-style: none; font-size: 13px; overflow: hidden; }
.tree li { display: flex; align-items: center; height: 32px; border-bottom: 1px solid #ccc; }
.name { padding-bottom: 2px; }
.tree .head { background: #f3f3f3; }
.tree .layer { border: 0; }
.tri { width: 10px; margin-left: 10px; border: 5px solid transparent; border-top: 8px solid #333; border-bottom: 0; }
.tri.none { visibility: hidden; background: none; }
.l1 { margin-left: 17px; }
.ti { width: 16px; height: 16px; margin: 0 26px 0 10px; }
.tree .curve { border: 0; background: #e1efff; }
.tree .curve.end { border-bottom: 1px solid #ccc; }
.thumb { display: block; width: 46px; height: 32px; margin-left: 37px; font: bold 44px/22px "Noto Sans", sans-serif; }
.dim { color: #555; }
.eye { width: 6px; height: 14px; margin-left: auto; }
.panel-foot { display: flex; align-items: center; flex: none; height: 30px; padding-left: 4px; gap: 13px; }
.slider { width: 82px; height: 22px; margin-left: auto; }

.status { display: flex; align-items: center; flex: none; height: 42px; color: #111; white-space: nowrap; }
.hint { width: 1011px; text-indent: -8px; }
.hint small { white-space: pre; }
.selection { width: 224px; margin-left: -8px; }
.fill, .stroke { display: flex; align-items: center; gap: 4px; }
.fill { width: 251px; }
.chip { width: 26px; height: 26px; margin-left: -1px; }

.taskbar { display: flex; flex: none; height: 11px; background: #18202c; overflow: hidden; }
.task-light { width: 394px; border-top: 1px solid #ccc; background: #f3f3f3; }
.task-search { width: 275px; height: 12px; margin: 3px 0 0 185px; border: 1px solid #777; background: #3e3e3e; flex: none; }
.task-apps { display: flex; align-items: flex-end; flex: none; width: 502px; padding-left: 86px; }
.task-apps > i { flex: none; }
.app-blue { width: 24px; height: 2px; background: #1b5cb8; }
.app-ring { width: 20px; height: 3px; margin: 0 23px 0 40px; border-top: 2px solid #2aa8b5; border-radius: 50% 50% 0 0; }
.app-orange { width: 61px; height: 11px; background: #b0622d; }
.app-brown { width: 28px; height: 2px; margin-left: 78px; background: #5e3214; }
.app-purple { width: 28px; height: 2px; margin: 0 16px 0 35px; background: #4a1b68; }
.app-grey { display: flex; align-items: flex-end; justify-content: center; width: 61px; height: 11px; background: #4a515b; }
.app-grey i { width: 18px; height: 3px; border-radius: 50% 50% 0 0; background: #a5c83c; }
.clock { margin: 4px 0 0 auto; padding-right: 46px; color: #fff; font-size: 15px; line-height: 16px; }
</style>
